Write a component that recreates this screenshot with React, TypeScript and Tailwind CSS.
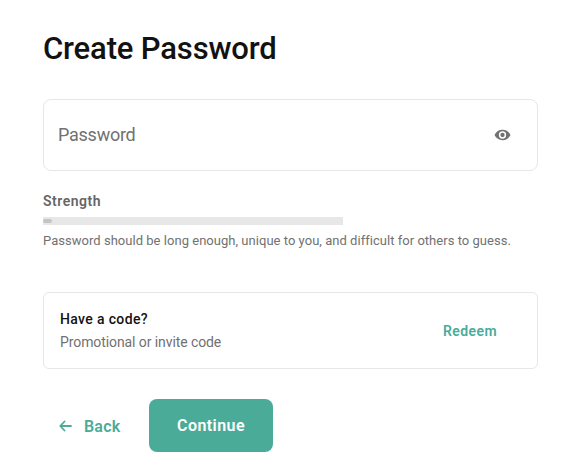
import React, { useState } from 'react';

const App = () => {
  const [password, setPassword] = useState('');
  const [visible, setVisible] = useState<boolean>(false);

  const handleSubmit = (e: React.FormEvent) => {
    e.preventDefault();
  };

  return (
    <div className="h-[474px] w-[583px] bg-white pl-[43px] pt-[29px] font-['Roboto',sans-serif]">
      <form onSubmit={handleSubmit} className="w-[495px]">
        <h1 className="h-[70px] whitespace-nowrap text-[31px] font-medium leading-10 tracking-[-0.15px] text-[#121212]">
          Create Password
        </h1>

        <div className="flex h-[72px] items-center rounded-lg border border-[#e7e7e7] pl-[14px] pr-[26px]">
          <input
            type={visible ? 'text' : 'password'}
            name="password"
            placeholder="Password"
            value={password}
            onChange={(e) => setPassword(e.target.value)}
            className="min-w-0 flex-1 text-[18px] leading-6 tracking-[-0.25px] text-[#121212] outline-none placeholder:text-[#717171]"
          />
          <button type="button" aria-label="Show password" onClick={() => setVisible(!visible)}>
            <svg width="17" height="12" viewBox="0 0 17 12" fill="none">
              <path d="M.5 6C2.2 2.6 5 .8 8.5 .8s6.3 1.800 8 5.200c-1.700 3.400-4.500 5.200-8 5.200S2.200 9.400.5 6Z" fill="#717171" />
              <circle cx="8.5" cy="6" r="2.9" stroke="white" strokeWidth="1.5" />
            </svg>
          </button>
        </div>

        <div className="pt-5">
          <p className="w-fit text-[14px] font-semibold leading-5 tracking-[0.5px] text-[#666666]">Strength</p>
          <div className="mt-1.5 flex h-2 w-[300px] items-center bg-[#e7e7e7]">
            <div className="h-1 w-[9px] rounded-sm bg-[#c4c4c4]" />
          </div>
          <p className="mt-1.5 w-fit whitespace-nowrap text-[13px] leading-5 tracking-[0.03px] text-[#717171]">
            Password should be long enough, unique to you, and difficult for others to guess.
          </p>
        </div>

        <div className="mt-[41px] flex h-[77px] items-center justify-between rounded-md border border-[#e7e7e7] pl-4 pr-10">
          <div>
            <p className="w-fit text-[14px] font-medium leading-[23px] tracking-[0.35px] text-[#121212]">Have a code?</p>
            <p className="w-fit text-[14px] leading-[23px] tracking-[-0.09px] text-[#717171]">Promotional or invite code</p>
          </div>
          <button type="button" className="text-[14px] font-semibold leading-5 tracking-[0.4px] text-[#4aac98]">
            Redeem
          </button>
        </div>

        <div className="mt-[30px] flex h-[53px] items-center">
          <button
            type="button"
            className="flex w-[106px] items-center gap-3 pl-4 text-[16px] font-semibold leading-6 tracking-[0.2px] text-[#4aac98]"
          >
            <svg width="13" height="12" viewBox="0 0 13 12" fill="none" stroke="currentColor" strokeWidth="1.8" strokeLinecap="round" strokeLinejoin="round">
              <path d="M12 6H1.5M5.5 1.5L1.2 6l4.300 4.500" />
            </svg>
            <span className="pt-0.5">Back</span>
          </button>
          <button
            type="submit"
            className="h-[53px] w-[124px] rounded-lg bg-[#4aac98] text-[16px] font-semibold leading-6 tracking-[0.45px] text-white"
          >
            Continue
          </button>
        </div>
      </form>
    </div>
  );
};

export default App;
